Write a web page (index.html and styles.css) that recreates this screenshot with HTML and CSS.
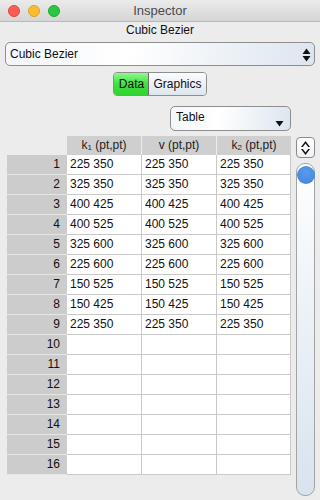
FILE: index.html
```html
<!DOCTYPE html>
<html>
<head>
<meta charset="utf-8">
<link rel="stylesheet" href="styles.css">
</head>
<body>
<div class="window">
  <div class="titlebar">
    <div class="lights">
      <span class="light red"></span>
      <span class="light yellow"></span>
      <span class="light green"></span>
    </div>
    <div class="title">Inspector</div>
  </div>
  <div class="label">Cubic Bezier</div>
  <div class="popup">
    <span>Cubic Bezier</span>
    <svg class="updown" width="9" height="14" viewBox="0 0 9 14"><path d="M4.5 0.5 L8.5 6 L0.5 6 Z M0.5 8 L8.5 8 L4.5 13.5 Z" fill="#111"/></svg>
  </div>
  <div class="segrow">
    <div class="seg">
      <div class="segitem on">Data</div>
      <div class="segitem">Graphics</div>
    </div>
  </div>
  <div class="tablerow">
    <div class="popup2">
      <span>Table</span>
      <svg class="down" width="9" height="7" viewBox="0 0 9 7"><path d="M0.5 1 L8.5 1 L4.5 6.5 Z" fill="#111"/></svg>
    </div>
  </div>
  <div class="main">
    <div class="grid">
      <div class="corner"></div>
      <div class="hd">k<sub>1</sub> (pt,pt)</div>
      <div class="hd">v (pt,pt)</div>
      <div class="hd last">k<sub>2</sub> (pt,pt)</div>

      <div class="rh">1</div><div class="c">225 350</div><div class="c">225 350</div><div class="c last">225 350</div>
      <div class="rh">2</div><div class="c">325 350</div><div class="c">325 350</div><div class="c last">325 350</div>
      <div class="rh">3</div><div class="c">400 425</div><div class="c">400 425</div><div class="c last">400 425</div>
      <div class="rh">4</div><div class="c">400 525</div><div class="c">400 525</div><div class="c last">400 525</div>
      <div class="rh">5</div><div class="c">325 600</div><div class="c">325 600</div><div class="c last">325 600</div>
      <div class="rh">6</div><div class="c">225 600</div><div class="c">225 600</div><div class="c last">225 600</div>
      <div class="rh">7</div><div class="c">150 525</div><div class="c">150 525</div><div class="c last">150 525</div>
      <div class="rh">8</div><div class="c">150 425</div><div class="c">150 425</div><div class="c last">150 425</div>
      <div class="rh">9</div><div class="c">225 350</div><div class="c">225 350</div><div class="c last">225 350</div>
      <div class="rh">10</div><div class="c"></div><div class="c"></div><div class="c last"></div>
      <div class="rh">11</div><div class="c"></div><div class="c"></div><div class="c last"></div>
      <div class="rh">12</div><div class="c"></div><div class="c"></div><div class="c last"></div>
      <div class="rh">13</div><div class="c"></div><div class="c"></div><div class="c last"></div>
      <div class="rh">14</div><div class="c"></div><div class="c"></div><div class="c last"></div>
      <div class="rh">15</div><div class="c"></div><div class="c"></div><div class="c last"></div>
      <div class="rh">16</div><div class="c"></div><div class="c"></div><div class="c last"></div>
    </div>
    <div class="side">
      <div class="stepper">
        <svg width="11" height="16" viewBox="0 0 11 16"><path d="M5.5 1 L10 7 L8.2 7 L5.5 3.4 L2.8 7 L1 7 Z M1 9 L2.8 9 L5.5 12.6 L8.2 9 L10 9 L5.5 15 Z" fill="#111"/></svg>
      </div>
      <div class="track">
        <div class="knob"></div>
      </div>
    </div>
  </div>
</div>
</body>
</html>
```
FILE: styles.css
```css
* { box-sizing: border-box; }
html, body { margin: 0; padding: 0; }
body {
  width: 320px;
  height: 500px;
  overflow: hidden;
  background: #ececec;
  font-family: "Liberation Sans", Arial, sans-serif;
  font-size: 12px;
  color: #111;
}
.window {
  width: 320px;
  height: 500px;
  background: #ececec;
  display: flex;
  flex-direction: column;
}
.titlebar {
  height: 22px;
  background: linear-gradient(#ebebeb, #d5d5d5);
  border-bottom: 1px solid #b9b9b9;
  display: flex;
  align-items: center;
  justify-content: center;
  position: relative;
  border-radius: 5px 5px 0 0;
}
.lights {
  position: absolute;
  left: 8px;
  top: 5px;
  display: flex;
  gap: 8px;
}
.light {
  width: 12px;
  height: 12px;
  border-radius: 50%;
  display: block;
}
.red { background: #fc5d57; border: 1px solid #e0443e; }
.yellow { background: #fdbc2f; border: 1px solid #dea123; }
.green { background: #2ac840; border: 1px solid #1aab29; }
.title {
  font-size: 13px;
  color: #4a4a4a;
  line-height: 16px;
  padding-top: 1px;
}
.label {
  text-align: center;
  line-height: 16px;
  height: 16px;
  margin-top: 0;
}
.popup {
  margin: 4px 5px 0 5px;
  height: 24px;
  border: 1px solid #8e8e8e;
  border-radius: 5px;
  background: linear-gradient(100deg, #f3f6fa 0%, #ffffff 40%, #dce5ef 100%);
  display: flex;
  align-items: center;
  justify-content: space-between;
  padding: 0 3px 0 4px;
}
.updown { margin-top: 1px; }
.segrow {
  display: flex;
  justify-content: center;
  margin-top: 6px;
}
.seg {
  display: flex;
  height: 24px;
  border: 1px solid #8e8e8e;
  border-radius: 4px;
  overflow: hidden;
}
.segitem {
  display: flex;
  align-items: center;
  padding: 0 4px;
  background: linear-gradient(#fafcfe, #dde6ef);
}
.segitem.on {
  width: 35px;
  justify-content: center;
  padding: 0;
  background: linear-gradient(#8ef98e, #3fe03f 50%, #2fd42f);
  border-right: 1px solid #6a6a6a;
}
.tablerow {
  display: flex;
  padding-left: 170px;
  margin-top: 10px;
}
.popup2 {
  width: 121px;
  height: 25px;
  border: 1px solid #8e8e8e;
  border-radius: 5px;
  background: linear-gradient(100deg, #f3f6fa 0%, #ffffff 40%, #dce5ef 100%);
  display: flex;
  align-items: center;
  justify-content: space-between;
  padding: 0 6px 0 5px;
}
.popup2 span { margin-top: -4px; }
.down { margin-top: 9px; }
.main {
  display: flex;
  margin-top: 5px;
  padding-left: 7px;
  gap: 5px;
}
.grid {
  display: grid;
  grid-template-columns: 60px 75px 75px 74px;
  grid-template-rows: 19px repeat(16, 20px);
}
.corner { background: transparent; }
.hd {
  background: #cfcfcf;
  border-right: 1px solid #ececec;
  text-align: center;
  line-height: 19px;
  color: #222;
}
.hd.last { border-right: none; }
.hd sub { font-size: 8px; vertical-align: -1px; line-height: 0; }
.rh {
  background: #cccccc;
  border-bottom: 1px solid #e6e6e6;
  text-align: right;
  padding-right: 7px;
  line-height: 19px;
}
.c {
  background: #fff;
  border-right: 1px solid #c9c9c9;
  border-bottom: 1px solid #c9c9c9;
  padding-left: 3px;
  line-height: 19px;
}
.c.last { border-right: 1px solid #c9c9c9; }
.side {
  display: flex;
  flex-direction: column;
  width: 19px;
  gap: 5px;
}
.stepper {
  height: 21px;
  margin-top: 1px;
  border: 1px solid #8a8a8a;
  border-radius: 4px;
  background: linear-gradient(#ffffff, #eef1f5);
  display: flex;
  align-items: center;
  justify-content: center;
}
.track {
  height: 333px;
  border: 1px solid #a3a3a3;
  border-radius: 9px;
  background: linear-gradient(#ffffff, #eef3f8 40%, #d9e3ee);
  padding-top: 2px;
  display: flex;
  justify-content: center;
}
.knob {
  width: 18px;
  height: 18px;
  border-radius: 50%;
  background: radial-gradient(circle at 50% 35%, #5a9bea, #3d84dc);
  flex: none;
}
```
